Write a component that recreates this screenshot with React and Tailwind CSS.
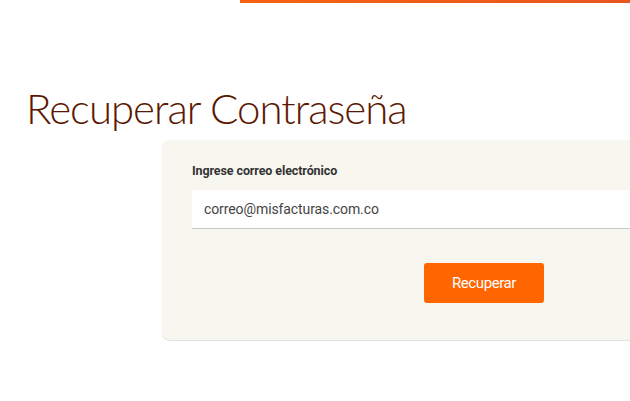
export default function App() {
  return (
    <div className="w-[630px] h-[401px] bg-white overflow-hidden relative">
      {/* top accent bar */}
      <div className="ml-[240px] h-[3px] bg-gradient-to-r from-[#f7620f] to-[#e8561e]" />

      <h1 className="mt-[81px] ml-[26px] text-[42px] leading-[48px] font-light text-[#5b1800] tracking-[-1px] font-['Lato',sans-serif]">
        Recuperar Contraseña
      </h1>

      <div className="mt-[8px] ml-[162px] w-[520px] h-[200px] bg-[#f8f7ef] rounded-lg shadow-[0_1px_1px_rgba(0,0,0,0.12)] pt-[23px] pl-[30px] font-['Roboto',sans-serif]">
        <label className="block text-[12.5px] font-bold text-[#333] leading-[16px] tracking-[-0.1px]">
          Ingrese correo electrónico
        </label>
        <div className="mt-[11px] w-[490px] h-[39px] bg-white border-b border-[#c9c9c9] flex items-center pl-[12px]">
          <span className="text-[14px] text-[#444] tracking-[-0.1px]">correo@misfacturas.com.co</span>
        </div>
        <div className="mt-[34px] ml-[232px]">
          <button className="w-[120px] h-[40px] bg-[#ff6600] rounded-[3px] text-white text-[15px] tracking-[-0.4px]">
            Recuperar
          </button>
        </div>
      </div>
    </div>
  );
}
